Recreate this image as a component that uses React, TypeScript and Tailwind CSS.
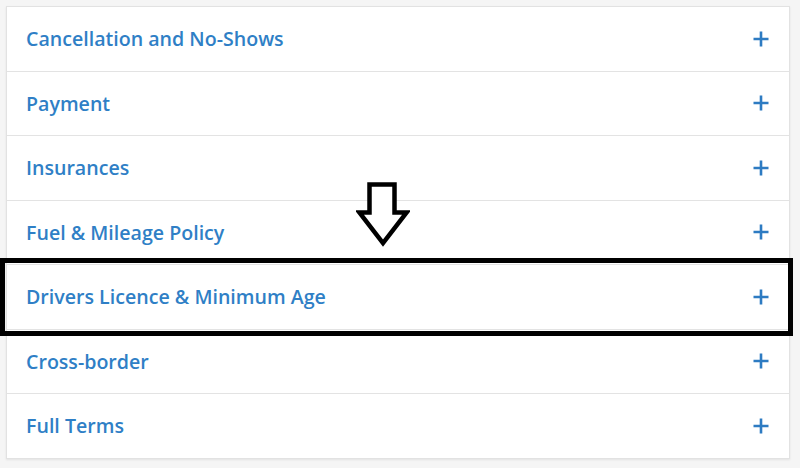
const items = [
  "Cancellation and No-Shows",
  "Payment",
  "Insurances",
  "Fuel & Mileage Policy",
  "Drivers Licence & Minimum Age",
  "Cross-border",
  "Full Terms",
];

function Plus() {
  return (
    <svg width="18" height="18" viewBox="0 0 18 18" aria-hidden>
      <path d="M9 1.5v15M1.5 9h15" stroke="#2d7bc2" strokeWidth="2.6" fill="none" />
    </svg>
  );
}

export default function App() {
  return (
    <div
      className="relative w-[800px] h-[468px] bg-[#f5f5f5] pt-[6px] pl-[6px] overflow-hidden"
      style={{ fontFamily: '"Open Sans", "Liberation Sans", sans-serif' }}
    >
      {/* Accordion card */}
      <div className="w-[784px] bg-white border border-[#e2e2e2] shadow-[0_1px_2px_rgba(0,0,0,0.08)]">
        {items.map((label, i) => (
          <div
            key={label}
            className={`flex items-center justify-between pl-[19px] pr-[19px] ${
              i < items.length - 1 ? "h-[64.5px] border-b border-[#e3e3e3]" : "h-[63.5px]"
            }`}
          >
            <span className="text-[19.6px] font-semibold text-[#2f7fc6]">{label}</span>
            <Plus />
          </div>
        ))}
      </div>

      {/* Annotation: arrow */}
      <svg
        className="absolute left-[356px] top-[182px]"
        width="54"
        height="66"
        viewBox="0 0 54 66"
        aria-hidden
      >
        <path
          d="M13.5 2.5h25v28h12L27 61 3.5 30.5h10z"
          fill="white"
          stroke="black"
          strokeWidth="4.5"
          strokeLinejoin="miter"
        />
      </svg>

      {/* Annotation: highlight box */}
      <div className="absolute left-0 top-[258px] w-[793px] h-[78px] border-[5px] border-black" />
    </div>
  );
}
